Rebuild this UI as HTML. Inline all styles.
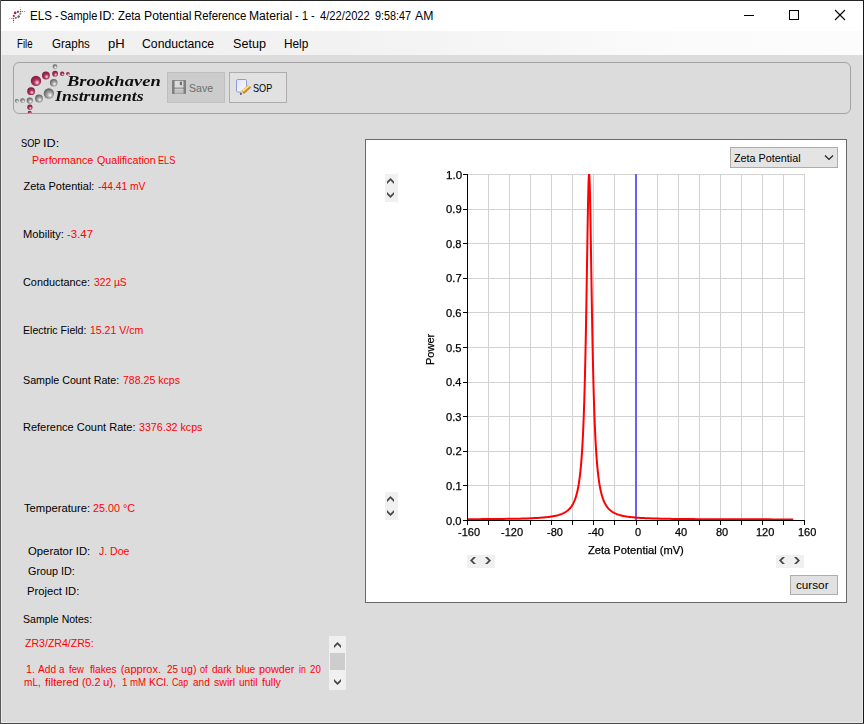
<!DOCTYPE html>
<html><head><meta charset="utf-8"><title>ELS</title>
<style>
html,body{margin:0;padding:0}
body{width:864px;height:724px;overflow:hidden;background:#dcdcdc;position:relative;font-family:'Liberation Sans', sans-serif}
.a{position:absolute;box-sizing:border-box}
.t{position:absolute;white-space:pre;transform-origin:0 0}
.ov{position:absolute;left:0;top:0}
</style></head><body>
<div class="a" style="left:0;top:0;width:864px;height:724px;background:#dcdcdc"></div>
<div class="a" style="left:1px;top:55px;width:862px;height:668px;border:1px solid #e9e9e9;border-top:none"></div>
<div class="a" style="left:0;top:0;width:864px;height:31px;background:#fff"></div>
<div class="a" style="left:0;top:31px;width:864px;height:24px;background:linear-gradient(90deg,#f0f0f0 0%,#f2f2f2 40%,#fbfbfb 80%,#fcfcfc 100%)"></div>
<div class="a" style="left:13px;top:62px;width:838px;height:52px;border:1px solid #a2a2a2;border-radius:6px"></div>
<div class="a" style="left:167px;top:72px;width:58px;height:31px;background:#cccccc;border:1px solid #bfbfbf"></div>
<div class="a" style="left:229px;top:72px;width:58px;height:31px;background:#e1e1e1;border:1px solid #adadad"></div>
<div class="a" style="left:365px;top:139px;width:482px;height:464px;background:#fff;border:1px solid #6a6a6a"></div>
<div class="a" style="left:730px;top:147px;width:108px;height:21px;background:#e4e4e4;border:1px solid #adadad"></div>
<div class="a" style="left:790px;top:575px;width:48px;height:20px;background:#e1e1e1;border:1px solid #adadad"></div>
<div class="a" style="left:385px;top:174px;width:13px;height:28px;background:#f0f0f0"></div>
<div class="a" style="left:385px;top:492px;width:13px;height:28px;background:#f0f0f0"></div>
<div class="a" style="left:467px;top:555px;width:28px;height:13px;background:#f0f0f0"></div>
<div class="a" style="left:776px;top:555px;width:28px;height:13px;background:#f0f0f0"></div>
<div class="a" style="left:329px;top:636px;width:17px;height:54px;background:#f0f0f0"></div>
<div class="a" style="left:330px;top:653px;width:15px;height:17px;background:#cdcdcd"></div>
<span class="t" style="left:66.7px;top:70.9px;font:italic bold 14.5px/20px 'Liberation Serif', serif;color:#101010;will-change:transform;transform-origin:0 0;transform:scaleX(1.278)">Brookhaven</span>
<span class="t" style="left:55.3px;top:85.7px;font:italic bold 14.5px/20px 'Liberation Serif', serif;color:#101010;will-change:transform;transform-origin:0 0;transform:scaleX(1.222)">Instruments</span>
<span class="t" style="left:421.8px;top:341px;-webkit-text-stroke:0.25px #000;font:11px/16px 'Liberation Sans', sans-serif;color:#000;transform-origin:0 0;transform:translate(0,16px) rotate(-90deg) translate(-8px,0);will-change:transform">Power</span>
<span class="t" style="left:29.98px;top:7.50px;color:#000;font: 12px/16px 'Liberation Sans', sans-serif;transform:scaleX(0.9657);">ELS</span>
<span class="t" style="left:54.90px;top:7.50px;color:#000;font: 12px/16px 'Liberation Sans', sans-serif;transform:scaleX(0.9000);">-</span>
<span class="t" style="left:59.68px;top:7.50px;color:#000;font: 12px/16px 'Liberation Sans', sans-serif;transform:scaleX(0.9165);">Sample</span>
<span class="t" style="left:98.59px;top:7.50px;color:#000;font: 12px/16px 'Liberation Sans', sans-serif;transform:scaleX(1.0286);">ID:</span>
<span class="t" style="left:117.90px;top:7.50px;color:#000;font: 12px/16px 'Liberation Sans', sans-serif;transform:scaleX(0.9439);">Zeta</span>
<span class="t" style="left:144.03px;top:7.50px;color:#000;font: 12px/16px 'Liberation Sans', sans-serif;transform:scaleX(1.0162);">Potential</span>
<span class="t" style="left:194.31px;top:7.50px;color:#000;font: 12px/16px 'Liberation Sans', sans-serif;transform:scaleX(0.9448);">Reference</span>
<span class="t" style="left:248.84px;top:7.50px;color:#000;font: 12px/16px 'Liberation Sans', sans-serif;transform:scaleX(1.0104);">Material</span>
<span class="t" style="left:295.40px;top:7.50px;color:#000;font: 12px/16px 'Liberation Sans', sans-serif;transform:scaleX(0.9000);">-</span>
<span class="t" style="left:301.75px;top:7.50px;color:#000;font: 12px/16px 'Liberation Sans', sans-serif;transform:scaleX(0.9000);">1</span>
<span class="t" style="left:311.30px;top:7.50px;color:#000;font: 12px/16px 'Liberation Sans', sans-serif;transform:scaleX(0.9000);">-</span>
<span class="t" style="left:320.42px;top:7.50px;color:#000;font: 12px/16px 'Liberation Sans', sans-serif;transform:scaleX(0.9333);">4/22/2022</span>
<span class="t" style="left:374.79px;top:7.50px;color:#000;font: 12px/16px 'Liberation Sans', sans-serif;transform:scaleX(0.9003);">9:58:47</span>
<span class="t" style="left:414.72px;top:7.50px;color:#000;font: 12px/16px 'Liberation Sans', sans-serif;transform:scaleX(1.0193);">AM</span>
<span class="t" style="left:16.54px;top:35.50px;color:#000;font: 12px/16px 'Liberation Sans', sans-serif;transform:scaleX(0.8056);">File</span>
<span class="t" style="left:51.75px;top:35.50px;color:#000;font: 12px/16px 'Liberation Sans', sans-serif;transform:scaleX(0.9621);">Graphs</span>
<span class="t" style="left:107.54px;top:35.50px;color:#000;font: 12px/16px 'Liberation Sans', sans-serif;transform:scaleX(1.0862);">pH</span>
<span class="t" style="left:141.71px;top:35.50px;color:#000;font: 12px/16px 'Liberation Sans', sans-serif;transform:scaleX(1.0187);">Conductance</span>
<span class="t" style="left:232.69px;top:35.50px;color:#000;font: 12px/16px 'Liberation Sans', sans-serif;transform:scaleX(1.0512);">Setup</span>
<span class="t" style="left:284.36px;top:35.50px;color:#000;font: 12px/16px 'Liberation Sans', sans-serif;transform:scaleX(0.9859);">Help</span>
<span class="t" style="left:189.27px;top:80.00px;color:#6d6d6d;font: 11px/16px 'Liberation Sans', sans-serif;transform:scaleX(0.9617);">Save</span>
<span class="t" style="left:252.54px;top:80.00px;color:#000;font: 11px/16px 'Liberation Sans', sans-serif;transform:scaleX(0.8271);">SOP</span>
<span class="t" style="left:21.43px;top:135.00px;color:#000;font: 11px/16px 'Liberation Sans', sans-serif;transform:scaleX(0.8407);">SOP</span>
<span class="t" style="left:43.40px;top:135.00px;color:#000;font: 11px/16px 'Liberation Sans', sans-serif;transform:scaleX(1.1500);">ID:</span>
<span class="t" style="left:31.70px;top:152.20px;color:#ff0000;font: 11px/16px 'Liberation Sans', sans-serif;transform:scaleX(0.9720);">Performance</span>
<span class="t" style="left:96.57px;top:152.20px;color:#ff0000;font: 11px/16px 'Liberation Sans', sans-serif;transform:scaleX(0.9688);">Qualification</span>
<span class="t" style="left:158.32px;top:152.20px;color:#ff0000;font: 11px/16px 'Liberation Sans', sans-serif;transform:scaleX(0.8310);">ELS</span>
<span class="t" style="left:23.47px;top:178.00px;color:#000;font: 11px/16px 'Liberation Sans', sans-serif;">Zeta Potential:</span>
<span class="t" style="left:98.28px;top:178.00px;color:#ff0000;font: 11px/16px 'Liberation Sans', sans-serif;transform:scaleX(0.9357);">-44.41 mV</span>
<span class="t" style="left:22.96px;top:226.00px;color:#000;font: 11px/16px 'Liberation Sans', sans-serif;transform:scaleX(1.0130);">Mobility:</span>
<span class="t" style="left:66.93px;top:226.00px;color:#ff0000;font: 11px/16px 'Liberation Sans', sans-serif;transform:scaleX(1.0375);">-3.47</span>
<span class="t" style="left:23.36px;top:274.00px;color:#000;font: 11px/16px 'Liberation Sans', sans-serif;transform:scaleX(0.9868);">Conductance:</span>
<span class="t" style="left:93.78px;top:274.00px;color:#ff0000;font: 11px/16px 'Liberation Sans', sans-serif;transform:scaleX(0.9319);">322 µS</span>
<span class="t" style="left:23.01px;top:322.00px;color:#000;font: 11px/16px 'Liberation Sans', sans-serif;transform:scaleX(0.9606);">Electric Field:</span>
<span class="t" style="left:90.41px;top:322.00px;color:#ff0000;font: 11px/16px 'Liberation Sans', sans-serif;transform:scaleX(0.9556);">15.21 V/cm</span>
<span class="t" style="left:23.36px;top:372.30px;color:#000;font: 11px/16px 'Liberation Sans', sans-serif;transform:scaleX(0.9713);">Sample Count Rate:</span>
<span class="t" style="left:123.15px;top:372.30px;color:#ff0000;font: 11px/16px 'Liberation Sans', sans-serif;transform:scaleX(0.9597);">788.25 kcps</span>
<span class="t" style="left:22.98px;top:419.30px;color:#000;font: 11px/16px 'Liberation Sans', sans-serif;">Reference Count Rate:</span>
<span class="t" style="left:138.87px;top:419.30px;color:#ff0000;font: 11px/16px 'Liberation Sans', sans-serif;transform:scaleX(0.9690);">3376.32 kcps</span>
<span class="t" style="left:23.59px;top:500.00px;color:#000;font: 11px/16px 'Liberation Sans', sans-serif;transform:scaleX(1.0220);">Temperature:</span>
<span class="t" style="left:93.16px;top:500.00px;color:#ff0000;font: 11px/16px 'Liberation Sans', sans-serif;transform:scaleX(0.9786);">25.00 °C</span>
<span class="t" style="left:27.54px;top:543.00px;color:#000;font: 11px/16px 'Liberation Sans', sans-serif;transform:scaleX(1.0288);">Operator ID:</span>
<span class="t" style="left:98.81px;top:543.00px;color:#ff0000;font: 11px/16px 'Liberation Sans', sans-serif;transform:scaleX(0.9542);">J. Doe</span>
<span class="t" style="left:27.56px;top:563.30px;color:#000;font: 11px/16px 'Liberation Sans', sans-serif;transform:scaleX(0.9821);">Group ID:</span>
<span class="t" style="left:27.16px;top:583.20px;color:#000;font: 11px/16px 'Liberation Sans', sans-serif;transform:scaleX(1.0182);">Project ID:</span>
<span class="t" style="left:23.37px;top:611.40px;color:#000;font: 11px/16px 'Liberation Sans', sans-serif;transform:scaleX(0.9572);">Sample Notes:</span>
<span class="t" style="left:24.69px;top:635.00px;color:#ff0000;font: 11px/16px 'Liberation Sans', sans-serif;transform:scaleX(0.9597);">ZR3/ZR4/ZR5:</span>
<span class="t" style="left:25.59px;top:660.70px;color:#ff0000;font: 11px/16px 'Liberation Sans', sans-serif;transform:scaleX(0.9793);">1.</span>
<span class="t" style="left:38.23px;top:660.70px;color:#ff0000;font: 11px/16px 'Liberation Sans', sans-serif;transform:scaleX(0.9280);">Add</span>
<span class="t" style="left:58.72px;top:660.70px;color:#ff0000;font: 11px/16px 'Liberation Sans', sans-serif;transform:scaleX(0.9000);">a</span>
<span class="t" style="left:68.74px;top:660.70px;color:#ff0000;font: 11px/16px 'Liberation Sans', sans-serif;transform:scaleX(0.8647);">few</span>
<span class="t" style="left:89.63px;top:660.70px;color:#ff0000;font: 11px/16px 'Liberation Sans', sans-serif;transform:scaleX(0.9274);">flakes</span>
<span class="t" style="left:120.63px;top:660.70px;color:#ff0000;font: 11px/16px 'Liberation Sans', sans-serif;">(approx.</span>
<span class="t" style="left:166.50px;top:660.70px;color:#ff0000;font: 11px/16px 'Liberation Sans', sans-serif;transform:scaleX(0.9067);">25</span>
<span class="t" style="left:180.92px;top:660.70px;color:#ff0000;font: 11px/16px 'Liberation Sans', sans-serif;transform:scaleX(0.9724);">ug)</span>
<span class="t" style="left:200.14px;top:660.70px;color:#ff0000;font: 11px/16px 'Liberation Sans', sans-serif;transform:scaleX(0.8229);">of</span>
<span class="t" style="left:212.09px;top:660.70px;color:#ff0000;font: 11px/16px 'Liberation Sans', sans-serif;transform:scaleX(0.9150);">dark</span>
<span class="t" style="left:235.95px;top:660.70px;color:#ff0000;font: 11px/16px 'Liberation Sans', sans-serif;transform:scaleX(0.9274);">blue</span>
<span class="t" style="left:259.01px;top:660.70px;color:#ff0000;font: 11px/16px 'Liberation Sans', sans-serif;transform:scaleX(0.9822);">powder</span>
<span class="t" style="left:299.05px;top:660.70px;color:#ff0000;font: 11px/16px 'Liberation Sans', sans-serif;transform:scaleX(0.8000);">in</span>
<span class="t" style="left:310.31px;top:660.70px;color:#ff0000;font: 11px/16px 'Liberation Sans', sans-serif;transform:scaleX(0.8800);">20</span>
<span class="t" style="left:24.46px;top:674.00px;color:#ff0000;font: 11px/16px 'Liberation Sans', sans-serif;transform:scaleX(0.9143);">mL,</span>
<span class="t" style="left:44.62px;top:674.00px;color:#ff0000;font: 11px/16px 'Liberation Sans', sans-serif;transform:scaleX(1.0241);">filtered</span>
<span class="t" style="left:81.74px;top:674.00px;color:#ff0000;font: 11px/16px 'Liberation Sans', sans-serif;transform:scaleX(0.9746);">(0.2</span>
<span class="t" style="left:103.27px;top:674.00px;color:#ff0000;font: 11px/16px 'Liberation Sans', sans-serif;transform:scaleX(1.0337);">u),</span>
<span class="t" style="left:122.28px;top:674.00px;color:#ff0000;font: 11px/16px 'Liberation Sans', sans-serif;transform:scaleX(0.9000);">1</span>
<span class="t" style="left:129.89px;top:674.00px;color:#ff0000;font: 11px/16px 'Liberation Sans', sans-serif;transform:scaleX(0.8842);">mM</span>
<span class="t" style="left:149.12px;top:674.00px;color:#ff0000;font: 11px/16px 'Liberation Sans', sans-serif;transform:scaleX(0.9430);">KCl.</span>
<span class="t" style="left:171.95px;top:674.00px;color:#ff0000;font: 11px/16px 'Liberation Sans', sans-serif;transform:scaleX(0.8000);">Cap</span>
<span class="t" style="left:192.99px;top:674.00px;color:#ff0000;font: 11px/16px 'Liberation Sans', sans-serif;transform:scaleX(0.9109);">and</span>
<span class="t" style="left:214.09px;top:674.00px;color:#ff0000;font: 11px/16px 'Liberation Sans', sans-serif;transform:scaleX(0.9581);">swirl</span>
<span class="t" style="left:238.76px;top:674.00px;color:#ff0000;font: 11px/16px 'Liberation Sans', sans-serif;transform:scaleX(0.9173);">until</span>
<span class="t" style="left:261.53px;top:674.00px;color:#ff0000;font: 11px/16px 'Liberation Sans', sans-serif;transform:scaleX(0.9652);">fully</span>
<span class="t" style="left:733.78px;top:150.00px;color:#000;font: 11px/16px 'Liberation Sans', sans-serif;transform:scaleX(0.9813);">Zeta Potential</span>
<span class="t" style="left:796.32px;top:577.00px;color:#000;font: 11px/16px 'Liberation Sans', sans-serif;transform:scaleX(1.0644);">cursor</span>
<span class="t" style="left:587.97px;top:542.00px;color:#000;font: 11px/16px 'Liberation Sans', sans-serif;transform:scaleX(1.0112);will-change:transform;-webkit-text-stroke:0.25px #000;">Zeta Potential (mV)</span>
<span class="t" style="left:446.07px;top:512.50px;color:#000;font: 11px/16px 'Liberation Sans', sans-serif;transform:scaleX(1.0138);will-change:transform;-webkit-text-stroke:0.25px #000;">0.0</span>
<span class="t" style="left:446.07px;top:477.90px;color:#000;font: 11px/16px 'Liberation Sans', sans-serif;transform:scaleX(1.0226);will-change:transform;-webkit-text-stroke:0.25px #000;">0.1</span>
<span class="t" style="left:446.07px;top:443.30px;color:#000;font: 11px/16px 'Liberation Sans', sans-serif;transform:scaleX(1.0226);will-change:transform;-webkit-text-stroke:0.25px #000;">0.2</span>
<span class="t" style="left:446.07px;top:408.70px;color:#000;font: 11px/16px 'Liberation Sans', sans-serif;transform:scaleX(1.0138);will-change:transform;-webkit-text-stroke:0.25px #000;">0.3</span>
<span class="t" style="left:446.07px;top:374.10px;color:#000;font: 11px/16px 'Liberation Sans', sans-serif;transform:scaleX(1.0051);will-change:transform;-webkit-text-stroke:0.25px #000;">0.4</span>
<span class="t" style="left:446.07px;top:339.50px;color:#000;font: 11px/16px 'Liberation Sans', sans-serif;transform:scaleX(1.0138);will-change:transform;-webkit-text-stroke:0.25px #000;">0.5</span>
<span class="t" style="left:446.07px;top:304.90px;color:#000;font: 11px/16px 'Liberation Sans', sans-serif;transform:scaleX(1.0138);will-change:transform;-webkit-text-stroke:0.25px #000;">0.6</span>
<span class="t" style="left:446.07px;top:270.30px;color:#000;font: 11px/16px 'Liberation Sans', sans-serif;transform:scaleX(1.0226);will-change:transform;-webkit-text-stroke:0.25px #000;">0.7</span>
<span class="t" style="left:446.07px;top:235.70px;color:#000;font: 11px/16px 'Liberation Sans', sans-serif;transform:scaleX(1.0138);will-change:transform;-webkit-text-stroke:0.25px #000;">0.8</span>
<span class="t" style="left:446.07px;top:201.10px;color:#000;font: 11px/16px 'Liberation Sans', sans-serif;transform:scaleX(1.0226);will-change:transform;-webkit-text-stroke:0.25px #000;">0.9</span>
<span class="t" style="left:445.53px;top:166.50px;color:#000;font: 11px/16px 'Liberation Sans', sans-serif;transform:scaleX(1.0500);will-change:transform;-webkit-text-stroke:0.25px #000;">1.0</span>
<span class="t" style="left:458.34px;top:524.00px;color:#000;font: 11px/16px 'Liberation Sans', sans-serif;will-change:transform;-webkit-text-stroke:0.25px #000;">-160</span>
<span class="t" style="left:500.64px;top:524.00px;color:#000;font: 11px/16px 'Liberation Sans', sans-serif;will-change:transform;-webkit-text-stroke:0.25px #000;">-120</span>
<span class="t" style="left:546.50px;top:524.00px;color:#000;font: 11px/16px 'Liberation Sans', sans-serif;will-change:transform;-webkit-text-stroke:0.25px #000;">-80</span>
<span class="t" style="left:587.60px;top:524.00px;color:#000;font: 11px/16px 'Liberation Sans', sans-serif;will-change:transform;-webkit-text-stroke:0.25px #000;">-40</span>
<span class="t" style="left:635.10px;top:524.00px;color:#000;font: 11px/16px 'Liberation Sans', sans-serif;will-change:transform;-webkit-text-stroke:0.25px #000;">0</span>
<span class="t" style="left:674.50px;top:524.00px;color:#000;font: 11px/16px 'Liberation Sans', sans-serif;will-change:transform;-webkit-text-stroke:0.25px #000;">40</span>
<span class="t" style="left:716.48px;top:524.00px;color:#000;font: 11px/16px 'Liberation Sans', sans-serif;will-change:transform;-webkit-text-stroke:0.25px #000;">80</span>
<span class="t" style="left:755.52px;top:524.00px;color:#000;font: 11px/16px 'Liberation Sans', sans-serif;will-change:transform;-webkit-text-stroke:0.25px #000;">120</span>
<span class="t" style="left:797.52px;top:524.00px;color:#000;font: 11px/16px 'Liberation Sans', sans-serif;will-change:transform;-webkit-text-stroke:0.25px #000;">160</span>
<svg class="ov" width="864" height="724" viewBox="0 0 864 724">
<defs>
<radialGradient id="gc" cx="0.55" cy="0.6" r="0.62" fx="0.62" fy="0.68"><stop offset="0" stop-color="#fdeef2"/><stop offset="0.18" stop-color="#e39ab4"/><stop offset="0.45" stop-color="#aa3660"/><stop offset="0.8" stop-color="#901e46"/><stop offset="1" stop-color="#80153c"/></radialGradient>
<radialGradient id="gg" cx="0.55" cy="0.6" r="0.62" fx="0.62" fy="0.68"><stop offset="0" stop-color="#ffffff"/><stop offset="0.2" stop-color="#d2d2d2"/><stop offset="0.5" stop-color="#9a9a9a"/><stop offset="0.85" stop-color="#6c6c6c"/><stop offset="1" stop-color="#585858"/></radialGradient>
<clipPath id="tb"><rect x="14" y="63" width="836" height="50" rx="5"/></clipPath>
<clipPath id="plot"><rect x="467" y="174" width="338" height="346"/></clipPath>
</defs>
<g clip-path="url(#tb)"><circle cx="36" cy="80.9" r="5.2" fill="url(#gc)"/><circle cx="45.9" cy="75.5" r="3.9" fill="url(#gc)"/><circle cx="55.1" cy="73.7" r="2.9" fill="url(#gc)"/><circle cx="62.2" cy="73.7" r="2.2" fill="url(#gc)"/><circle cx="67.9" cy="73.7" r="1.8" fill="url(#gc)"/><circle cx="31.1" cy="91.2" r="3.9" fill="url(#gc)"/><circle cx="29.9" cy="107.2" r="2.6" fill="url(#gc)"/><circle cx="29.7" cy="112.7" r="2.0" fill="url(#gc)"/><circle cx="55" cy="66.6" r="2.3" fill="url(#gg)"/><circle cx="53.7" cy="82.7" r="3.8" fill="url(#gg)"/><circle cx="48.9" cy="93.5" r="5.2" fill="url(#gg)"/><circle cx="39" cy="98.5" r="3.9" fill="url(#gg)"/><circle cx="29.8" cy="100.6" r="3.1" fill="url(#gg)"/><circle cx="22.6" cy="100.6" r="2.4" fill="url(#gg)"/><circle cx="16.8" cy="100.8" r="1.9" fill="url(#gg)"/></g>
<rect x="488" y="174" width="1" height="346" fill="#d2d2d2"/><rect x="509" y="174" width="1" height="346" fill="#d2d2d2"/><rect x="530" y="174" width="1" height="346" fill="#d2d2d2"/><rect x="551" y="174" width="1" height="346" fill="#d2d2d2"/><rect x="572" y="174" width="1" height="346" fill="#d2d2d2"/><rect x="593" y="174" width="1" height="346" fill="#d2d2d2"/><rect x="614" y="174" width="1" height="346" fill="#d2d2d2"/><rect x="657" y="174" width="1" height="346" fill="#d2d2d2"/><rect x="678" y="174" width="1" height="346" fill="#d2d2d2"/><rect x="699" y="174" width="1" height="346" fill="#d2d2d2"/><rect x="720" y="174" width="1" height="346" fill="#d2d2d2"/><rect x="741" y="174" width="1" height="346" fill="#d2d2d2"/><rect x="762" y="174" width="1" height="346" fill="#d2d2d2"/><rect x="783" y="174" width="1" height="346" fill="#d2d2d2"/><rect x="804" y="174" width="1" height="346" fill="#d2d2d2"/><rect x="467" y="485" width="338" height="1" fill="#d2d2d2"/><rect x="467" y="451" width="338" height="1" fill="#d2d2d2"/><rect x="467" y="416" width="338" height="1" fill="#d2d2d2"/><rect x="467" y="382" width="338" height="1" fill="#d2d2d2"/><rect x="467" y="347" width="338" height="1" fill="#d2d2d2"/><rect x="467" y="312" width="338" height="1" fill="#d2d2d2"/><rect x="467" y="278" width="338" height="1" fill="#d2d2d2"/><rect x="467" y="243" width="338" height="1" fill="#d2d2d2"/><rect x="467" y="209" width="338" height="1" fill="#d2d2d2"/><rect x="467" y="174" width="338" height="1" fill="#d2d2d2"/>
<rect x="635" y="174" width="2" height="346" fill="#6862ee"/>
<path d="M467.00,519.22 L471.00,519.20 L475.00,519.18 L479.00,519.15 L483.00,519.12 L487.00,519.09 L491.00,519.06 L495.00,519.02 L499.00,518.98 L503.00,518.93 L507.00,518.87 L511.00,518.81 L515.00,518.73 L519.00,518.64 L523.00,518.53 L527.00,518.41 L531.00,518.25 L532.00,518.21 L533.00,518.16 L534.00,518.11 L535.00,518.06 L536.00,518.01 L537.00,517.95 L538.00,517.89 L539.00,517.82 L540.00,517.75 L541.00,517.68 L542.00,517.60 L543.00,517.52 L544.00,517.43 L545.00,517.34 L546.00,517.24 L547.00,517.13 L548.00,517.01 L549.00,516.89 L550.00,516.75 L551.00,516.61 L552.00,516.45 L553.00,516.28 L554.00,516.10 L555.00,515.90 L556.00,515.68 L557.00,515.44 L558.00,515.18 L559.00,514.89 L560.00,514.57 L561.00,514.22 L562.00,513.83 L563.00,513.40 L564.00,512.91 L565.00,512.36 L566.00,511.75 L567.00,511.05 L568.00,510.25 L569.00,509.33 L570.00,508.28 L571.00,507.05 L572.00,505.61 L573.00,503.91 L574.00,501.88 L575.00,499.45 L575.25,498.76 L575.50,498.04 L575.75,497.28 L576.00,496.48 L576.25,495.64 L576.50,494.75 L576.75,493.81 L577.00,492.82 L577.25,491.78 L577.50,490.67 L577.75,489.50 L578.00,488.26 L578.25,486.94 L578.50,485.54 L578.75,484.04 L579.00,482.46 L579.25,480.77 L579.50,478.96 L579.75,477.04 L580.00,474.98 L580.25,472.77 L580.50,470.41 L580.75,467.87 L581.00,465.14 L581.25,462.21 L581.50,459.05 L581.75,455.64 L582.00,451.95 L582.25,447.97 L582.50,443.66 L582.75,438.99 L583.00,433.93 L583.25,428.43 L583.50,422.45 L583.75,415.95 L584.00,408.88 L584.25,401.19 L584.50,392.82 L584.75,383.73 L585.00,373.86 L585.25,363.17 L585.50,351.62 L585.75,339.19 L586.00,325.89 L586.25,311.75 L586.50,296.86 L586.75,281.36 L587.00,265.46 L587.25,249.45 L587.50,233.72 L587.75,218.74 L588.00,205.06 L588.25,193.24 L588.50,183.86 L588.75,177.42 L589.00,174.28 L589.25,174.63 L589.50,178.45 L589.75,185.52 L590.00,195.43 L590.25,207.67 L590.50,221.66 L590.75,236.82 L591.00,252.64 L591.25,268.66 L591.50,284.50 L591.75,299.89 L592.00,314.64 L592.25,328.62 L592.50,341.74 L592.75,354.00 L593.00,365.37 L593.25,375.90 L593.50,385.61 L593.75,394.55 L594.00,402.78 L594.25,410.34 L594.50,417.29 L594.75,423.69 L595.00,429.56 L595.25,434.98 L595.50,439.96 L595.75,444.55 L596.00,448.80 L596.25,452.71 L596.50,456.34 L596.75,459.70 L597.00,462.81 L597.25,465.70 L597.50,468.39 L597.75,470.89 L598.00,473.22 L598.25,475.40 L598.50,477.43 L598.75,479.33 L599.00,481.11 L599.25,482.78 L599.50,484.35 L599.75,485.82 L600.00,487.21 L600.25,488.51 L600.50,489.74 L600.75,490.90 L601.00,491.99 L601.25,493.03 L601.50,494.01 L601.75,494.93 L602.00,495.81 L602.25,496.64 L602.50,497.43 L602.75,498.19 L603.00,498.90 L603.25,499.58 L603.50,500.23 L603.75,500.84 L604.00,501.43 L604.25,501.99 L605.25,504.00 L606.25,505.69 L607.25,507.11 L608.25,508.33 L609.25,509.38 L610.25,510.29 L611.25,511.08 L612.25,511.78 L613.25,512.39 L614.25,512.94 L615.25,513.42 L616.25,513.85 L617.25,514.24 L618.25,514.59 L619.25,514.91 L620.25,515.19 L621.25,515.45 L622.25,515.69 L623.25,515.91 L624.25,516.11 L625.25,516.29 L626.25,516.46 L627.25,516.62 L628.25,516.76 L629.25,516.89 L630.25,517.02 L631.25,517.13 L632.25,517.24 L633.25,517.34 L634.25,517.44 L635.25,517.52 L636.25,517.61 L637.25,517.68 L638.25,517.76 L639.25,517.83 L640.25,517.89 L641.25,517.95 L642.25,518.01 L643.25,518.06 L644.25,518.11 L645.25,518.16 L646.25,518.21 L647.25,518.25 L648.25,518.29 L649.25,518.33 L653.25,518.47 L657.25,518.59 L661.25,518.69 L665.25,518.77 L669.25,518.84 L673.25,518.90 L677.25,518.96 L681.25,519.00 L685.25,519.04 L689.25,519.08 L693.25,519.11 L697.25,519.14 L701.25,519.16 L705.25,519.19 L709.25,519.21 L713.25,519.23 L717.25,519.24 L721.25,519.26 L725.25,519.27 L729.25,519.28 L733.25,519.30 L737.25,519.31 L741.25,519.32 L745.25,519.33 L749.25,519.34 L753.25,519.34 L757.25,519.35 L761.25,519.36 L765.25,519.36 L769.25,519.37 L773.25,519.38 L777.25,519.38 L781.25,519.39 L785.25,519.39 L789.25,519.39 L793.25,519.40" fill="none" stroke="#ff0000" stroke-width="2" stroke-linejoin="round" clip-path="url(#plot)"/>
<rect x="467" y="174" width="1" height="347" fill="#000"/>
<rect x="467" y="520" width="338" height="1" fill="#000"/>
<rect x="467" y="520" width="1" height="5" fill="#000"/><rect x="488" y="520" width="1" height="5" fill="#000"/><rect x="509" y="520" width="1" height="5" fill="#000"/><rect x="530" y="520" width="1" height="5" fill="#000"/><rect x="551" y="520" width="1" height="5" fill="#000"/><rect x="572" y="520" width="1" height="5" fill="#000"/><rect x="593" y="520" width="1" height="5" fill="#000"/><rect x="614" y="520" width="1" height="5" fill="#000"/><rect x="636" y="520" width="1" height="5" fill="#000"/><rect x="657" y="520" width="1" height="5" fill="#000"/><rect x="678" y="520" width="1" height="5" fill="#000"/><rect x="699" y="520" width="1" height="5" fill="#000"/><rect x="720" y="520" width="1" height="5" fill="#000"/><rect x="741" y="520" width="1" height="5" fill="#000"/><rect x="762" y="520" width="1" height="5" fill="#000"/><rect x="783" y="520" width="1" height="5" fill="#000"/><rect x="804" y="520" width="1" height="5" fill="#000"/><rect x="463" y="520" width="4" height="1" fill="#000"/><rect x="463" y="485" width="4" height="1" fill="#000"/><rect x="463" y="451" width="4" height="1" fill="#000"/><rect x="463" y="416" width="4" height="1" fill="#000"/><rect x="463" y="382" width="4" height="1" fill="#000"/><rect x="463" y="347" width="4" height="1" fill="#000"/><rect x="463" y="312" width="4" height="1" fill="#000"/><rect x="463" y="278" width="4" height="1" fill="#000"/><rect x="463" y="243" width="4" height="1" fill="#000"/><rect x="463" y="209" width="4" height="1" fill="#000"/><rect x="463" y="174" width="4" height="1" fill="#000"/>
<!-- spinners -->
<polygon points="390.5,178 394.0,181.5 394.0,184 390.5,180.5 387.0,184 387.0,181.5" fill="#484848"/><polygon points="387.0,192 387.0,194.5 390.5,198 394.0,194.5 394.0,192 390.5,195.5" fill="#484848"/>
<polygon points="390.5,496 394.0,499.5 394.0,502 390.5,498.5 387.0,502 387.0,499.5" fill="#484848"/><polygon points="387.0,510 387.0,512.5 390.5,516 394.0,512.5 394.0,510 390.5,513.5" fill="#484848"/>
<polygon points="470,560.5 473.5,557.0 476,557.0 472.5,560.5 476,564.0 473.5,564.0" fill="#484848"/><polygon points="491,560.5 487.5,557.0 485,557.0 488.5,560.5 485,564.0 487.5,564.0" fill="#484848"/>
<polygon points="779,560.5 782.5,557.0 785,557.0 781.5,560.5 785,564.0 782.5,564.0" fill="#484848"/><polygon points="800,560.5 796.5,557.0 794,557.0 797.5,560.5 794,564.0 796.5,564.0" fill="#484848"/>
<!-- scrollbar arrows -->
<polygon points="337.5,642 341.0,645.5 341.0,648 337.5,644.5 334.0,648 334.0,645.5" fill="#484848"/><polygon points="334.0,679 334.0,681.5 337.5,685 341.0,681.5 341.0,679 337.5,682.5" fill="#484848"/>
<!-- dropdown chevron -->
<path d="M825,155.5 L829,159.5 L833,155.5" fill="none" stroke="#222" stroke-width="1.2"/>
<!-- window controls -->
<rect x="744" y="15" width="10" height="1" fill="#000"/>
<rect x="789.5" y="10.5" width="9" height="9" fill="none" stroke="#000" stroke-width="1"/>
<path d="M835,10 L845,20 M845,10 L835,20" stroke="#000" stroke-width="1.1" fill="none"/>
<!-- title icon -->
<g>
<circle cx="15.1" cy="12.95" r="1.35" fill="#a0244e"/><circle cx="17.9" cy="11.8" r="1.1" fill="#a0244e"/><circle cx="13.8" cy="15.9" r="1.1" fill="#a63058"/>
<circle cx="20.6" cy="11.5" r="0.8" fill="#a0244e"/><circle cx="22.6" cy="11.5" r="0.6" fill="#a83a60"/><circle cx="24.5" cy="11.5" r="0.5" fill="#b85878"/>
<circle cx="13.45" cy="20.5" r="0.7" fill="#a0244e"/><circle cx="13.45" cy="22.3" r="0.5" fill="#b04468"/>
<circle cx="20.25" cy="13.8" r="1.1" fill="#8e8e8e"/><circle cx="18.6" cy="16.6" r="1.3" fill="#666"/><circle cx="15.8" cy="17.9" r="1.1" fill="#7c7c7c"/>
<circle cx="13.45" cy="18.5" r="0.8" fill="#555"/><circle cx="11.5" cy="18.5" r="0.6" fill="#909090"/><circle cx="9.5" cy="18.5" r="0.5" fill="#b4b4b4"/>
<circle cx="20.6" cy="7.5" r="0.45" fill="#b0b0b0"/><circle cx="20.6" cy="9.5" r="0.6" fill="#666"/>
</g>
<!-- save icon -->
<g>
<rect x="172" y="80" width="14" height="14" rx="0.8" fill="#7f7f7f"/>
<rect x="174.6" y="80.8" width="8.8" height="6.8" fill="#dcdcdc"/>
<rect x="179.8" y="81.6" width="2.2" height="3.6" fill="#707070"/>
<rect x="174.6" y="88.6" width="8.8" height="4.9" fill="#cfcfcf"/>
<rect x="174.6" y="90.4" width="8.8" height="0.9" fill="#b4b4b4"/><rect x="174.6" y="92.2" width="8.8" height="0.9" fill="#b4b4b4"/>
</g>
<!-- sop icon -->
<defs>
<linearGradient id="pg" x1="0" y1="0" x2="1" y2="1"><stop offset="0" stop-color="#dfe4f6"/><stop offset="1" stop-color="#fafaff"/></linearGradient>
<linearGradient id="pn" x1="0" y1="0" x2="0" y2="1"><stop offset="0" stop-color="#f0b040"/><stop offset="0.35" stop-color="#fff2c4"/><stop offset="0.6" stop-color="#e89a20"/><stop offset="1" stop-color="#b86c10"/></linearGradient>
</defs>
<g>
<rect x="236.5" y="79.5" width="10" height="12.5" rx="1.2" fill="url(#pg)" stroke="#8c9ade" stroke-width="1"/>
<g transform="translate(240.0,94.6) rotate(-41.2)">
<path d="M0,0 L3.6,-2 L3.6,2 Z" fill="#ecd2a0"/>
<path d="M-0.2,0 L1.9,-1.15 L1.9,1.15 Z" fill="#1c2850"/>
<rect x="3.6" y="-2" width="9.6" height="4" rx="1" fill="url(#pn)"/>
<rect x="3.6" y="-2" width="0.8" height="4" fill="#a86818" opacity="0.5"/>
</g>
</g>
</svg>
<div class="a" style="left:0;top:0;width:864px;height:1px;background:#262626"></div>
<div class="a" style="left:863px;top:0;width:1px;height:724px;background:#161616"></div>
<div class="a" style="left:0;top:0;width:1px;height:724px;background:#585858"></div>
<div class="a" style="left:0;top:723px;width:864px;height:1px;background:#484848"></div>
</body></html>
